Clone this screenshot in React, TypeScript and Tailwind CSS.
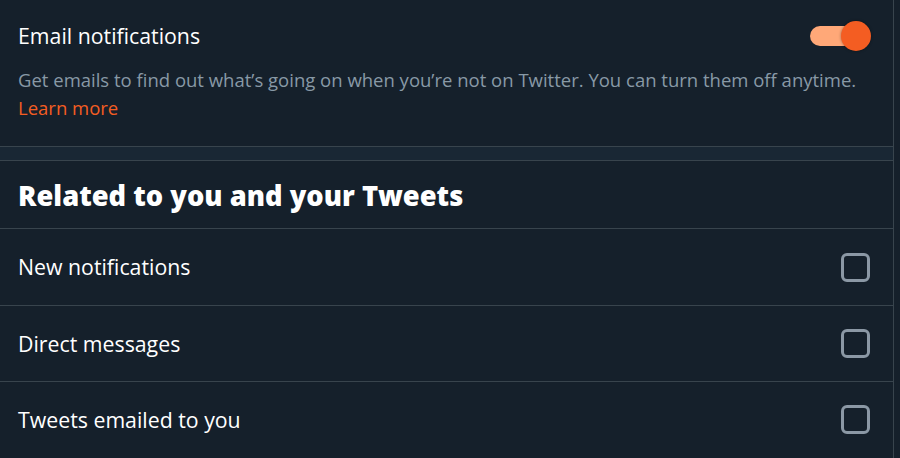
import React from "react";

const rows = ["New notifications", "Direct messages", "Tweets emailed to you"];

function Checkbox() {
  return <div className="h-[29px] w-[29px] rounded-[6px] border-[3px] border-[#8b98a5]" />;
}

export default function App() {
  return (
    <div
      className="flex h-[458px] w-[900px] overflow-hidden bg-[#15202b] text-white"
      style={{ fontFamily: '"Open Sans", "Noto Sans", sans-serif' }}
    >
      <div className="flex w-[894px] shrink-0 flex-col border-r border-[#38444d]">
        <div className="pl-[18px] pr-[22px] pt-5 pb-6">
          <div className="flex h-8 items-center justify-between">
            <span className="text-[21.3px] leading-6">Email notifications</span>
            <div className="relative h-8 w-[61px]">
              <div className="absolute left-0 top-[6px] h-[20px] w-[44px] rounded-full bg-[#ffa878]" />
              <div className="absolute right-0 top-[1px] h-[30px] w-[30px] rounded-full bg-[#f45d22] shadow-[0_0_3px_rgba(0,0,0,0.4)]" />
            </div>
          </div>
          <p className="mt-[14px] text-[18.5px] leading-7 text-[#8899a6]">
            Get emails to find out what’s going on when you’re not on Twitter. You can turn them off anytime.
            <br />
            <span className="text-[#f45d22]">Learn more</span>
          </p>
        </div>
        <div className="h-[15px] border-y border-[#38444d] bg-[#192734]" />
        <div className="flex h-[67px] items-center pl-[18px] pt-[3px]">
          <h2 className="text-[27.3px] font-black leading-8">Related to you and your Tweets</h2>
        </div>
        {rows.map((r, i) => (
          <div
            key={r}
            className={`flex shrink-0 items-center justify-between border-t border-[#38444d] pl-[18px] pr-[23px] ${i === 0 ? "h-[77px]" : "h-[76px]"}`}
          >
            <span className="text-[21.3px] leading-6">{r}</span>
            <Checkbox />
          </div>
        ))}
      </div>
    </div>
  );
}
